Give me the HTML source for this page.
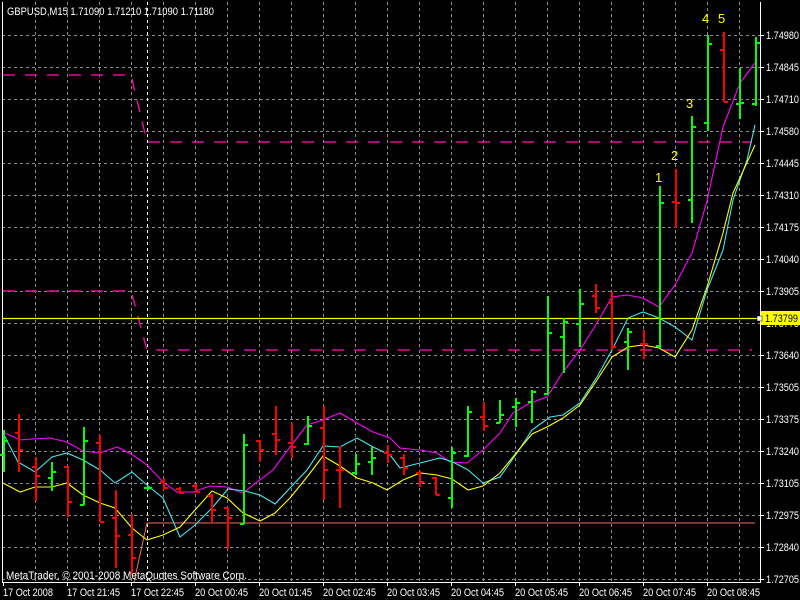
<!DOCTYPE html>
<html><head><meta charset="utf-8"><style>
html,body{margin:0;padding:0;background:#000;width:800px;height:600px;overflow:hidden}
svg{display:block}
text{font-family:"Liberation Sans",sans-serif;font-size:11px;fill:#fff}
text.y{fill:#ffff00;font-size:13px}
</style></head><body>
<svg width="800" height="600" viewBox="0 0 800 600" xmlns="http://www.w3.org/2000/svg">
<rect width="800" height="600" fill="#000"/>
<g stroke="#8c8c8c" stroke-width="1" stroke-dasharray="3,3" shape-rendering="crispEdges">
<path d="M35.5 2V582M67.5 2V582M99.5 2V582M131.5 2V582M163.5 2V582M195.5 2V582M227.5 2V582M259.5 2V582M291.5 2V582M323.5 2V582M355.5 2V582M387.5 2V582M419.5 2V582M451.5 2V582M483.5 2V582M515.5 2V582M547.5 2V582M579.5 2V582M611.5 2V582M643.5 2V582M675.5 2V582M707.5 2V582M739.5 2V582"/>
<path d="M2 35.5H760M2 67.5H760M2 99.5H760M2 131.5H760M2 163.5H760M2 195.5H760M2 227.5H760M2 259.5H760M2 291.5H760M2 323.5H760M2 355.5H760M2 387.5H760M2 419.5H760M2 451.5H760M2 483.5H760M2 515.5H760M2 547.5H760M2 579.5H760"/>
</g>
<path d="M147.5 2V582" stroke="#fff" stroke-dasharray="3,3" shape-rendering="crispEdges"/>
<g stroke="#fff" shape-rendering="crispEdges">
<path d="M2.5 2V583M760.5 2V583M2 582.5H761"/>
<path d="M761 35.5h3M761 67.5h3M761 99.5h3M761 131.5h3M761 163.5h3M761 195.5h3M761 227.5h3M761 259.5h3M761 291.5h3M761 355.5h3M761 387.5h3M761 419.5h3M761 451.5h3M761 483.5h3M761 515.5h3M761 547.5h3M761 579.5h3"/>
<path d="M3.5 582v4M67.5 582v4M131.5 582v4M195.5 582v4M259.5 582v4M323.5 582v4M387.5 582v4M451.5 582v4M515.5 582v4M579.5 582v4M643.5 582v4M707.5 582v4"/>
</g>
<g fill="none" stroke="#e0109a" stroke-width="1.5" stroke-dasharray="12,10">
<path d="M3 75H131L147 142H752"/>
<path d="M3 291H131L147 350H752"/>
</g>
<path d="M134 582L147 523H755" fill="none" stroke="#f07060" stroke-width="1"/>
<path d="M2 318.5H760" stroke="#ffff00" stroke-width="1.2"/>
<g fill="none" stroke-width="1.1">
<polyline stroke="#ff00ff" points="3,432 20,440 33,439 50,438 67,442 83,451 100,453 117,447 133,455 147,465 163,482 177,492 193,492 210,486 227,487 243,493 257,482 273,470 290,447 307,425 323,420 340,413 357,423 373,432 390,438 400,448 420,450 437,453 450,462 467,463 483,450 500,433 513,413 530,403 547,397 563,372 580,350 597,323 612,297 627,295 643,298 659,307 675,285 692,253 707,201 723,127 740,83 755,63"/>
<polyline stroke="#40e8f0" points="3,433 18,462 35,472 52,457 67,453 83,460 100,470 115,483 132,472 147,485 163,498 180,537 195,525 212,508 228,489 245,491 260,495 275,504 290,488 307,470 323,446 340,447 357,438 373,447 390,455 400,468 420,463 440,458 453,462 468,470 483,483 500,477 517,453 532,430 550,417 563,415 580,403 597,377 612,350 628,318 643,312 659,318 675,327 692,340 707,290 723,250 733,200 747,160 755,125"/>
<polyline stroke="#ffff00" points="3,483 20,492 35,487 52,487 67,483 83,495 100,503 115,508 132,528 147,540 163,535 180,527 195,510 212,491 227,498 243,513 260,521 275,513 290,498 307,477 323,456 340,466 357,478 373,483 387,490 403,480 420,473 437,475 452,479 468,490 483,486 500,473 517,452 532,434 547,427 563,418 580,405 597,380 612,357 628,347 643,345 659,348 675,357 692,330 707,287 723,233 733,193 755,145"/>
</g>
<path stroke="#00ff00" stroke-width="2" fill="none" d="M4 430V472M0 455H4M4 441H8M52 462V491M48 478H52M52 472H56M84 427V505M80 505H84M84 441H88M148 486V490M144 488H152M244 434V524M240 524H244M244 445H248M308 416V445M304 444H308M308 426H312M356 454V475M352 473H356M356 464H360M372 447V475M368 462H372M372 458H376M452 447V508M448 498H452M452 453H456M468 406V457M464 456H468M468 412H472M500 400V423M496 423H500M500 415H504M516 398V427M512 407H516M516 403H520M532 390V423M528 402H532M532 392H536M548 296V394M544 394H548M548 333H552M564 318V373M560 337H564M564 322H568M580 289V347M576 324H580M580 304H584M628 328V370M624 342H628M628 332H632M660 186V348M656 346H660M660 203H664M692 116V223M688 200H692M692 127H696M708 35V131M704 123H708M708 44H712M740 68V119M736 104H740M740 103H744M756 37V106M752 104H756M756 43H760"/>
<path stroke="#ff0000" stroke-width="2" fill="none" d="M19 414V472M15 433H19M19 450H23M36 457V501M32 467H36M36 476H40M68 466V517M64 467H68M68 502H72M100 435V522M96 443H100M100 522H104M116 490V568M112 518H116M116 536H120M132 514V575M128 535H132M132 558H136M164 478V490M160 482H164M164 488H168M180 487V494M176 489H180M180 493H184M196 484V493M192 486H196M196 492H200M212 494V522M208 496H212M212 510H216M228 508V549M224 508H228M228 518H232M260 440V462M256 441H260M260 450H264M276 406V455M272 434H276M276 440H280M292 423V458M288 443H292M292 447H296M324 406V500M320 428H324M324 470H328M340 446V508M336 470H340M340 470H344M388 445V463M384 453H388M388 455H392M404 454V475M400 458H404M404 468H408M420 471V487M416 473H420M420 482H424M436 477V495M432 478H436M436 495H440M484 402V431M480 417H484M484 426H488M596 284V313M592 296H596M596 308H600M612 292V350M608 303H612M612 347H616M644 330V359M640 344H644M644 344H648M676 169V228M672 202H676M676 203H680M724 32V102M720 50H724M724 102H728"/>
<text class="y" x="655" y="182">1</text><text class="y" x="671" y="160">2</text><text class="y" x="686" y="108">3</text><text class="y" x="702" y="23">4</text><text class="y" x="718" y="23">5</text>
<text x="7" y="15" textLength="207" lengthAdjust="spacingAndGlyphs">GBPUSD,M15  1.71090 1.71210 1.71090 1.71180</text>
<text x="6" y="579" textLength="241" lengthAdjust="spacingAndGlyphs">MetaTrader, © 2001-2008 MetaQuotes Software Corp.</text>
<g>
<text x="766" y="39" textLength="33" lengthAdjust="spacingAndGlyphs">1.74980</text><text x="766" y="71" textLength="33" lengthAdjust="spacingAndGlyphs">1.74845</text><text x="766" y="103" textLength="33" lengthAdjust="spacingAndGlyphs">1.74710</text><text x="766" y="135" textLength="33" lengthAdjust="spacingAndGlyphs">1.74580</text><text x="766" y="167" textLength="33" lengthAdjust="spacingAndGlyphs">1.74445</text><text x="766" y="199" textLength="33" lengthAdjust="spacingAndGlyphs">1.74310</text><text x="766" y="231" textLength="33" lengthAdjust="spacingAndGlyphs">1.74175</text><text x="766" y="263" textLength="33" lengthAdjust="spacingAndGlyphs">1.74040</text><text x="766" y="295" textLength="33" lengthAdjust="spacingAndGlyphs">1.73905</text><text x="766" y="327" textLength="33" lengthAdjust="spacingAndGlyphs">1.73775</text><text x="766" y="359" textLength="33" lengthAdjust="spacingAndGlyphs">1.73640</text><text x="766" y="391" textLength="33" lengthAdjust="spacingAndGlyphs">1.73505</text><text x="766" y="423" textLength="33" lengthAdjust="spacingAndGlyphs">1.73375</text><text x="766" y="455" textLength="33" lengthAdjust="spacingAndGlyphs">1.73240</text><text x="766" y="487" textLength="33" lengthAdjust="spacingAndGlyphs">1.73105</text><text x="766" y="519" textLength="33" lengthAdjust="spacingAndGlyphs">1.72975</text><text x="766" y="551" textLength="33" lengthAdjust="spacingAndGlyphs">1.72840</text><text x="766" y="583" textLength="33" lengthAdjust="spacingAndGlyphs">1.72705</text>
</g>
<rect x="761" y="311" width="39" height="14" fill="#ffff00"/>
<rect x="757" y="316" width="5" height="5" fill="#fff" stroke="#000" stroke-width="0.5"/>
<text x="765" y="322" style="fill:#000" textLength="33" lengthAdjust="spacingAndGlyphs">1.73799</text>
<g>
<text x="3" y="596" textLength="50" lengthAdjust="spacingAndGlyphs">17 Oct 2008</text><text x="67" y="596" textLength="53" lengthAdjust="spacingAndGlyphs">17 Oct 21:45</text><text x="131" y="596" textLength="53" lengthAdjust="spacingAndGlyphs">17 Oct 22:45</text><text x="195" y="596" textLength="53" lengthAdjust="spacingAndGlyphs">20 Oct 00:45</text><text x="259" y="596" textLength="53" lengthAdjust="spacingAndGlyphs">20 Oct 01:45</text><text x="323" y="596" textLength="53" lengthAdjust="spacingAndGlyphs">20 Oct 02:45</text><text x="387" y="596" textLength="53" lengthAdjust="spacingAndGlyphs">20 Oct 03:45</text><text x="451" y="596" textLength="53" lengthAdjust="spacingAndGlyphs">20 Oct 04:45</text><text x="515" y="596" textLength="53" lengthAdjust="spacingAndGlyphs">20 Oct 05:45</text><text x="579" y="596" textLength="53" lengthAdjust="spacingAndGlyphs">20 Oct 06:45</text><text x="643" y="596" textLength="53" lengthAdjust="spacingAndGlyphs">20 Oct 07:45</text><text x="707" y="596" textLength="53" lengthAdjust="spacingAndGlyphs">20 Oct 08:45</text>
</g>
</svg>
</body></html>
